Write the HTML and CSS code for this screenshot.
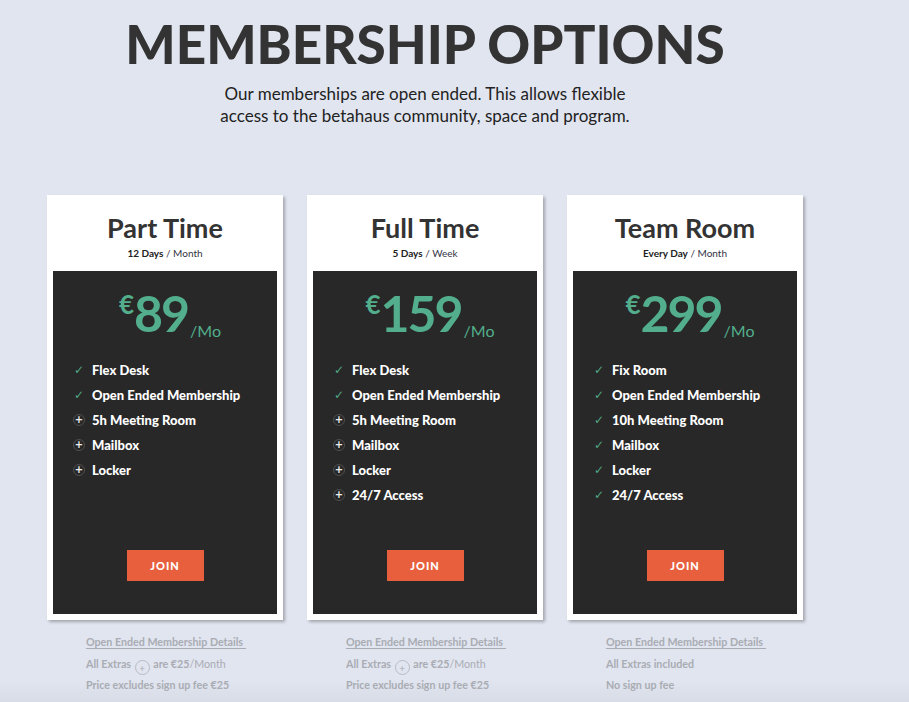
FILE: index.html
```html
<!DOCTYPE html>
<html lang="en">
<head>
<meta charset="utf-8">
<title>Membership Options</title>
<link rel="stylesheet" href="styles.css">
</head>
<body>
<div class="page">
  <header class="intro">
    <h1>MEMBERSHIP OPTIONS</h1>
    <p>Our memberships are open ended. This allows flexible<br>access to the betahaus community, space and program.</p>
  </header>

  <div class="plans">
    <section class="plan">
      <div class="card">
        <div class="card-head">
          <h2>Part Time</h2>
          <div class="freq"><b>12 Days</b> / Month</div>
        </div>
        <div class="card-body">
          <div class="price"><span class="cur">€</span><span class="amt">89</span><span class="per">/Mo</span></div>
          <ul class="features">
            <li><span class="ic check">✓</span>Flex Desk</li>
            <li><span class="ic check">✓</span>Open Ended Membership</li>
            <li><span class="ic plus">+</span>5h Meeting Room</li>
            <li><span class="ic plus">+</span>Mailbox</li>
            <li><span class="ic plus">+</span>Locker</li>
          </ul>
          <a class="join" href="#">JOIN</a>
        </div>
      </div>
      <div class="notes">
        <a class="details" href="#">Open Ended Membership Details</a>
        <p>All Extras <span class="mini-plus">+</span> are €25<span class="light">/Month</span></p>
        <p>Price excludes sign up fee €25</p>
      </div>
    </section>

    <section class="plan">
      <div class="card">
        <div class="card-head">
          <h2>Full Time</h2>
          <div class="freq"><b>5 Days</b> / Week</div>
        </div>
        <div class="card-body">
          <div class="price"><span class="cur">€</span><span class="amt">159</span><span class="per">/Mo</span></div>
          <ul class="features">
            <li><span class="ic check">✓</span>Flex Desk</li>
            <li><span class="ic check">✓</span>Open Ended Membership</li>
            <li><span class="ic plus">+</span>5h Meeting Room</li>
            <li><span class="ic plus">+</span>Mailbox</li>
            <li><span class="ic plus">+</span>Locker</li>
            <li><span class="ic plus">+</span>24/7 Access</li>
          </ul>
          <a class="join" href="#">JOIN</a>
        </div>
      </div>
      <div class="notes">
        <a class="details" href="#">Open Ended Membership Details</a>
        <p>All Extras <span class="mini-plus">+</span> are €25<span class="light">/Month</span></p>
        <p>Price excludes sign up fee €25</p>
      </div>
    </section>

    <section class="plan">
      <div class="card">
        <div class="card-head">
          <h2>Team Room</h2>
          <div class="freq"><b>Every Day</b> / Month</div>
        </div>
        <div class="card-body">
          <div class="price"><span class="cur">€</span><span class="amt">299</span><span class="per">/Mo</span></div>
          <ul class="features">
            <li><span class="ic check">✓</span>Fix Room</li>
            <li><span class="ic check">✓</span>Open Ended Membership</li>
            <li><span class="ic check">✓</span>10h Meeting Room</li>
            <li><span class="ic check">✓</span>Mailbox</li>
            <li><span class="ic check">✓</span>Locker</li>
            <li><span class="ic check">✓</span>24/7 Access</li>
          </ul>
          <a class="join" href="#">JOIN</a>
        </div>
      </div>
      <div class="notes">
        <a class="details" href="#">Open Ended Membership Details</a>
        <p>All Extras included</p>
        <p>No sign up fee</p>
      </div>
    </section>
  </div>
</div>
</body>
</html>
```

FILE: styles.css
```css
html, body {
  margin: 0;
  padding: 0;
}
body {
  background: linear-gradient(to bottom, #e1e5f0 0, #e1e5f0 680px, #d8dce6 702px);
  font-family: Lato, "Noto Sans", sans-serif;
  color: #333;
  height: 702px;
  overflow: hidden;
}
.page {
  width: 850px;
}
.intro {
  text-align: center;
  padding-top: 17px;
}
.intro h1 {
  margin: 0;
  font-size: 53px;
  line-height: 54px;
  font-weight: 900;
  color: #333;
  letter-spacing: 0;
}
.intro p {
  margin: 12px 0 0;
  font-size: 17px;
  line-height: 22px;
  color: #222;
}
.plans {
  display: flex;
  gap: 24px;
  padding-left: 47px;
  margin-top: 68px;
}
.plan {
  width: 236px;
}
.card {
  background: #fff;
  padding: 0 6px 6px;
  box-shadow: 2px 2px 3px rgba(0,0,0,0.28);
}
.card-head {
  height: 76px;
  text-align: center;
  box-sizing: border-box;
  padding-top: 16px;
}
.card-head h2 {
  margin: 0;
  font-size: 27px;
  line-height: 33px;
  font-weight: 700;
  color: #333;
}
.freq {
  margin-top: 3px;
  font-size: 10px;
  line-height: 12px;
  color: #334;
}
.freq b {
  font-weight: 700;
  color: #222;
}
.card-body {
  background: #282828;
  height: 343px;
  display: flex;
  flex-direction: column;
  align-items: center;
  box-sizing: border-box;
  padding: 17px 0 33px;
}
.price {
  color: #52ae8c;
  display: flex;
  align-items: flex-start;
  height: 58px;
  margin-left: 10px;
}
.price .cur {
  font-size: 26px;
  font-weight: 700;
  line-height: 28px;
  margin-top: 2px;
}
.price .amt {
  font-size: 50px;
  font-weight: 700;
  line-height: 50px;
  letter-spacing: -2px;
}
.price .per {
  font-size: 16px;
  font-weight: 400;
  line-height: 18px;
  margin-top: 34px;
  margin-left: 2px;
}
.features {
  list-style: none;
  margin: 11px 0 0;
  padding: 0 0 0 20px;
  align-self: stretch;
  flex: 1;
}
.features li {
  display: flex;
  align-items: center;
  height: 25px;
  font-size: 13px;
  font-weight: 900;
  color: #fff;
}
.ic {
  width: 12px;
  height: 12px;
  margin-right: 7px;
  display: flex;
  align-items: center;
  justify-content: center;
  flex: none;
}
.ic.check {
  color: #4ea885;
  font-size: 12px;
  font-weight: 400;
  font-family: "DejaVu Sans", sans-serif;
}
.ic.plus {
  border: 1px solid #4e4e4e;
  border-radius: 50%;
  box-sizing: border-box;
  color: #eee;
  font-size: 10px;
  line-height: 1;
  font-weight: 700;
  font-family: "DejaVu Sans", sans-serif;
}
.join {
  display: block;
  width: 77px;
  height: 31px;
  line-height: 31px;
  background: #e85f3d;
  color: #fff;
  text-align: center;
  font-size: 11px;
  font-weight: 900;
  letter-spacing: 1px;
  text-decoration: none;
}
.notes {
  padding: 15px 0 0 39px;
  font-size: 10.7px;
  font-weight: 700;
  color: #a9acb3;
}
.details {
  display: inline-block;
  color: #a9acb3;
  text-decoration: none;
  border-bottom: 1px solid #a9acb3;
  padding-right: 3px;
  line-height: 13px;
}
.notes p {
  margin: 8px 0 0;
  height: 13px;
  line-height: 13px;
}
.notes p + p {
  margin-top: 8px;
}
.mini-plus {
  display: inline-flex;
  align-items: flex-end;
  justify-content: center;
  width: 15px;
  height: 15px;
  box-sizing: border-box;
  border: 1px solid #b8bbc2;
  border-radius: 50%;
  font-weight: 400;
  font-size: 10px;
  line-height: 12px;
  vertical-align: -4px;
  margin: -4px 1px;
}
.light {
  font-weight: 400;
}
```
